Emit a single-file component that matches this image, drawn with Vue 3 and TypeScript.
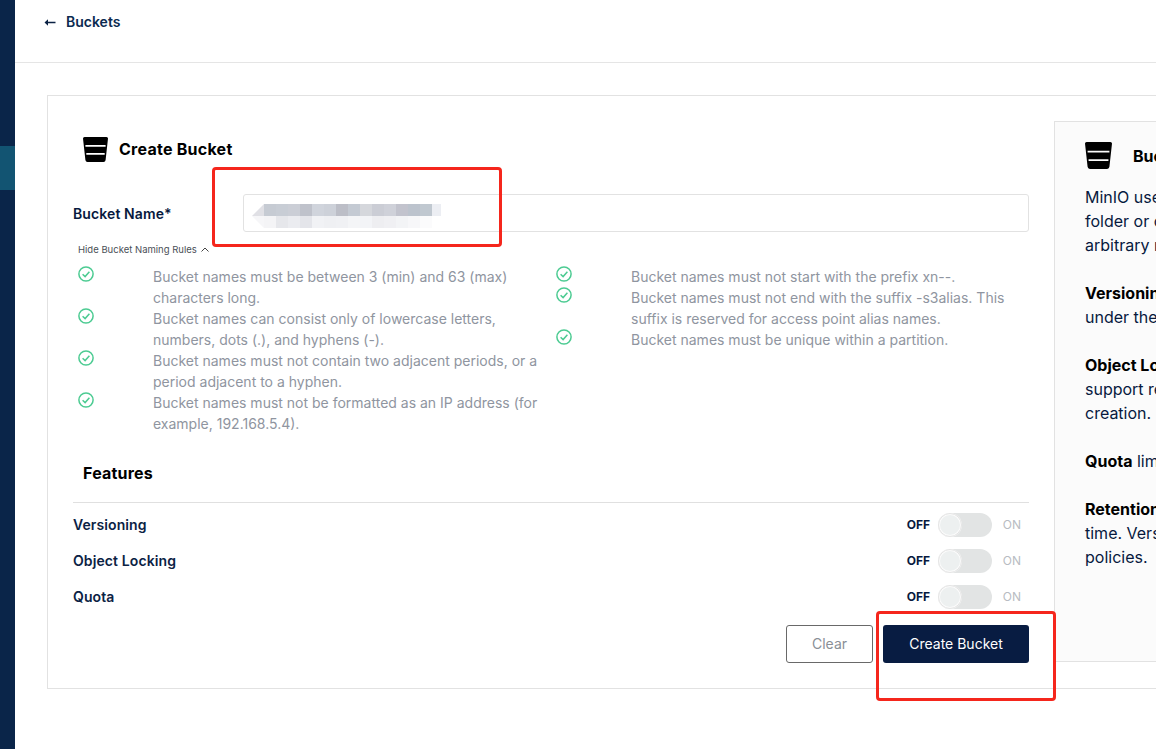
<script setup lang="ts">
const leftRules = [
  'Bucket names must be between 3 (min) and 63 (max) characters long.',
  'Bucket names can consist only of lowercase letters, numbers, dots (.), and hyphens (-).',
  'Bucket names must not contain two adjacent periods, or a period adjacent to a hyphen.',
  'Bucket names must not be formatted as an IP address (for example, 192.168.5.4).',
]
const rightRules = [
  'Bucket names must not start with the prefix xn--.',
  'Bucket names must not end with the suffix -s3alias. This suffix is reserved for access point alias names.',
  'Bucket names must be unique within a partition.',
]
const features = ['Versioning', 'Object Locking', 'Quota']
const topCells = ['#c6cbd3', '#c8cdd5', '#cbced6', '#bfc2cb', '#d0d4dc', '#cdd1d9', '#bcbec7', '#c4cad3', '#d5d7dc', '#cbcdd5', '#cfd1d9', '#c2c3cd', '#bcc3cd', '#c0c8d0', '#eceef3']
const bottomCells = ['#f4f4f6', '#e6e7eb', '#ebecf0', '#e4e5ea', '#f1f2f5', '#eff0f3', '#f0f1f4', '#f4f5f7', '#f3f4f7', '#eeeef1', '#f0f0f3', '#f3f4f6', '#f7f7f9', '#fbfbfc', '#ffffff']
</script>

<template>
  <div class="page">
    <aside class="sidebar"><div class="active"></div></aside>
    <main class="main">
      <header class="topbar">
        <svg class="back" viewBox="0 0 12 8" width="12" height="9">
          <path d="M0.5 4 L4 0.8 V3.2 H11.5 V4.8 H4 V7.2 Z" fill="#0b2244" />
        </svg>
        <span class="back-label">Buckets</span>
      </header>
      <section class="content">
        <div class="card">
          <form class="form" @submit.prevent>
            <div class="title-row">
              <svg class="bucket" viewBox="0 0 25 25" width="25" height="25">
                <path d="M1.5 0 H23.5 Q25 0 25 1.5 L22.6 23 Q22.4 25 20.5 25 H4.5 Q2.6 25 2.4 23 L0 1.5 Q0 0 1.5 0 Z M2.4 8 V9.7 H22.6 V8 Z M3.3 16 V17.7 H21.7 V16 Z" fill="#000" fill-rule="evenodd" />
              </svg>
              <h1>Create Bucket</h1>
            </div>
            <div class="name-row">
              <label>Bucket Name*</label>
              <div class="input">
                <div class="mosaic">
                  <i class="lead lead-top"></i>
                  <i v-for="(c, i) in topCells" :key="'t' + i" :style="{ background: c }"></i>
                  <i class="lead lead-bottom"></i>
                  <i v-for="(c, i) in bottomCells" :key="'b' + i" :style="{ background: c }"></i>
                </div>
              </div>
            </div>
            <div class="hide-rules">Hide Bucket Naming Rules
              <svg viewBox="0 0 8 5" width="8" height="5"><path d="M0.5 4.5 L4 1 L7.5 4.5" fill="none" stroke="#444" stroke-width="1" /></svg>
            </div>
            <div class="rules">
              <div class="rule-col">
                <div v-for="r in leftRules" :key="r" class="rule">
                  <svg class="check" viewBox="0 0 16 16" width="16" height="16">
                    <circle cx="8" cy="8" r="7.1" fill="none" stroke="#4ccb92" stroke-width="1.5" />
                    <path d="M4.6 8.2 L7.1 10.6 L11.4 5.8" fill="none" stroke="#4ccb92" stroke-width="1.5" />
                  </svg>
                  <p>{{ r }}</p>
                </div>
              </div>
              <div class="rule-col right">
                <div v-for="r in rightRules" :key="r" class="rule">
                  <svg class="check" viewBox="0 0 16 16" width="16" height="16">
                    <circle cx="8" cy="8" r="7.1" fill="none" stroke="#4ccb92" stroke-width="1.5" />
                    <path d="M4.6 8.2 L7.1 10.6 L11.4 5.8" fill="none" stroke="#4ccb92" stroke-width="1.5" />
                  </svg>
                  <p>{{ r }}</p>
                </div>
              </div>
            </div>
            <h2>Features</h2>
            <div class="features">
              <div v-for="f in features" :key="f" class="feature">
                <span class="feature-name">{{ f }}</span>
                <span class="off">OFF</span>
                <span class="switch"><span class="knob"></span></span>
                <span class="on">ON</span>
              </div>
            </div>
            <div class="actions">
              <button type="button" class="clear">Clear</button>
              <button type="submit" class="create">Create Bucket</button>
            </div>
          </form>
          <aside class="info">
            <div class="info-title">
              <svg class="bucket small" viewBox="0 0 25 25" width="27" height="27">
                <path d="M1.5 0 H23.5 Q25 0 25 1.5 L22.6 23 Q22.4 25 20.5 25 H4.5 Q2.6 25 2.4 23 L0 1.5 Q0 0 1.5 0 Z M2.4 8 V9.7 H22.6 V8 Z M3.3 16 V17.7 H21.7 V16 Z" fill="#000" fill-rule="evenodd" />
              </svg>
              <strong>Buckets</strong>
            </div>
            <p>MinIO uses buckets to organize objects. A bucket is similar to a<br />folder or directory in a filesystem, where each bucket can hold an<br />arbitrary number of objects.</p>
            <p><b>Versioning</b> allows to keep multiple versions of the same object<br />under the same key.</p>
            <p><b>Object Locking</b> prevents objects from being deleted. Required to<br />support retention and legal hold. Can only be enabled at bucket<br />creation.</p>
            <p><b>Quota</b> limits the amount of data in the bucket.</p>
            <p><b>Retention</b> imposes rules to prevent object deletion for a period of<br />time. Versioning must be enabled in order to set bucket retention<br />policies.</p>
          </aside>
        </div>
      </section>
    </main>
    <div class="mark mark-input"></div>
    <div class="mark mark-button"></div>
  </div>
</template>

<style>
html, body { margin: 0; background: #fff; overflow: hidden; }
</style>

<style scoped>
.page {
  position: relative;
  display: flex;
  width: 1156px;
  height: 749px;
  overflow: hidden;
  background: #fff;
  font-family: Inter, "Liberation Sans", sans-serif;
  color: #07193e;
}
.sidebar { flex: 0 0 15px; background: #0a2549; padding-top: 146px; box-sizing: border-box; }
.active { height: 44px; background: #125472; }
.main { flex: 1; min-width: 0; }
.topbar {
  display: flex;
  align-items: center;
  height: 44px;
  padding: 0 0 18px 29px;
  border-bottom: 1px solid #e5e5e5;
}
.back { margin-right: 10px; }
.back-label { font-size: 14px; font-weight: 600; color: #0b2a50; margin-bottom: 2px; }
.content { padding: 32px 0 0 32px; }
.card {
  display: flex;
  align-items: flex-start;
  width: 1200px;
  height: 594px;
  box-sizing: border-box;
  border: 1px solid #e2e2e2;
}
.form { flex: 0 0 1006px; box-sizing: border-box; padding: 41px 25px 0; }
.title-row { display: flex; align-items: center; gap: 11px; padding-left: 10px; height: 25px; }
.bucket { flex: none; }
h1 { margin: 0; font-size: 16px; font-weight: 700; letter-spacing: 0.25px; color: #000; line-height: 25px; }
.name-row { display: flex; align-items: center; margin-top: 32px; height: 38px; }
.name-row label { flex: 0 0 170px; font-size: 14px; font-weight: 600; letter-spacing: 0.1px; color: #07193e; }
.input {
  position: relative;
  flex: 1;
  height: 38px;
  box-sizing: border-box;
  border: 1px solid #e2e2e2;
  border-radius: 3px;
}
.mosaic {
  position: absolute;
  left: 8px;
  top: 9px;
  display: grid;
  grid-template-columns: repeat(16, 12px);
  grid-auto-rows: 12px;
  width: 189px;
  overflow: hidden;
}
.lead-top { background: #e0e0e5; clip-path: polygon(0 100%, 100% 0, 100% 100%); }
.lead-bottom { background: #f6f6f8; clip-path: polygon(0 0, 100% 0, 100% 100%); }
.hide-rules {
  display: flex;
  align-items: center;
  gap: 4px;
  margin: 12px 0 0 5px;
  height: 11px;
  font-size: 9.5px;
  line-height: 11px;
  color: #4a4f57;
}
.rules { display: flex; margin: 7px 0 0 5px; padding-top: 4px; }
.rule-col { flex: 0 0 478px; }
.rule-col.right { flex: 1; }
.rule { display: flex; gap: 59px; }
.rule p {
  margin: 0;
  width: 388px;
  font-size: 14px;
  line-height: 21px;
  color: #8f95a0;
}
.check { flex: none; }
h2 { margin: 29px 0 0 10px; font-size: 16px; font-weight: 700; letter-spacing: 0.2px; line-height: 20px; color: #000; }
.features { margin-top: 19px; border-top: 1px solid #e0e0e0; padding-top: 4px; }
.feature { display: flex; align-items: center; height: 36px; }
.feature-name { flex: 1; font-size: 14px; font-weight: 600; letter-spacing: 0.1px; color: #0b2244; margin-bottom: 2px; }
.off { font-size: 12px; font-weight: 700; color: #07193e; margin-bottom: 2px; }
.on { width: 29px; text-align: right; font-size: 12px; color: #b8bcc2; margin: 0 8px 2px 0; }
.switch {
  position: relative;
  margin-left: 8px;
  width: 54px;
  height: 24px;
  border-radius: 12px;
  background: #e2e4e4;
}
.knob {
  position: absolute;
  left: 0;
  top: 0;
  width: 24px;
  height: 24px;
  box-sizing: border-box;
  border-radius: 50%;
  border: 2px solid #fbfbfb;
  outline: 1px solid #e4e4e4;
  outline-offset: -1px;
  background: #edf0f0;
}
.actions { display: flex; justify-content: flex-end; gap: 10px; margin-top: 10px; }
.actions button {
  height: 38px;
  border-radius: 3px;
  font-family: inherit;
  font-size: 14px;
  font-weight: 400;
  padding: 0 0 2px;
}
.clear { width: 87px; background: #fff; border: 1px solid #696969; color: #8a8f96; }
.create { width: 146px; background: #081c42; border: none; color: #fff; }
.info {
  flex: 0 0 500px;
  height: 541px;
  margin-top: 25px;
  box-sizing: border-box;
  padding: 20px 0 0 30px;
  border: 1px solid #e2e2e2;
  background: #fbfbfb;
  font-size: 16px;
  line-height: 24px;
  color: #07193e;
}
.info-title { display: flex; align-items: center; gap: 21px; height: 27px; margin-bottom: 16px; }
.info-title strong { font-size: 16px; font-weight: 700; color: #000; }
.info p { margin: 0 0 24px; white-space: nowrap; }
.info b { font-weight: 700; color: #000; }
.mark {
  position: absolute;
  box-sizing: border-box;
  border: 3px solid #f5261c;
  border-radius: 4px;
  pointer-events: none;
}
.mark-input { left: 212px; top: 167px; width: 290px; height: 80px; }
.mark-button { left: 876px; top: 611px; width: 180px; height: 90px; }
</style>
